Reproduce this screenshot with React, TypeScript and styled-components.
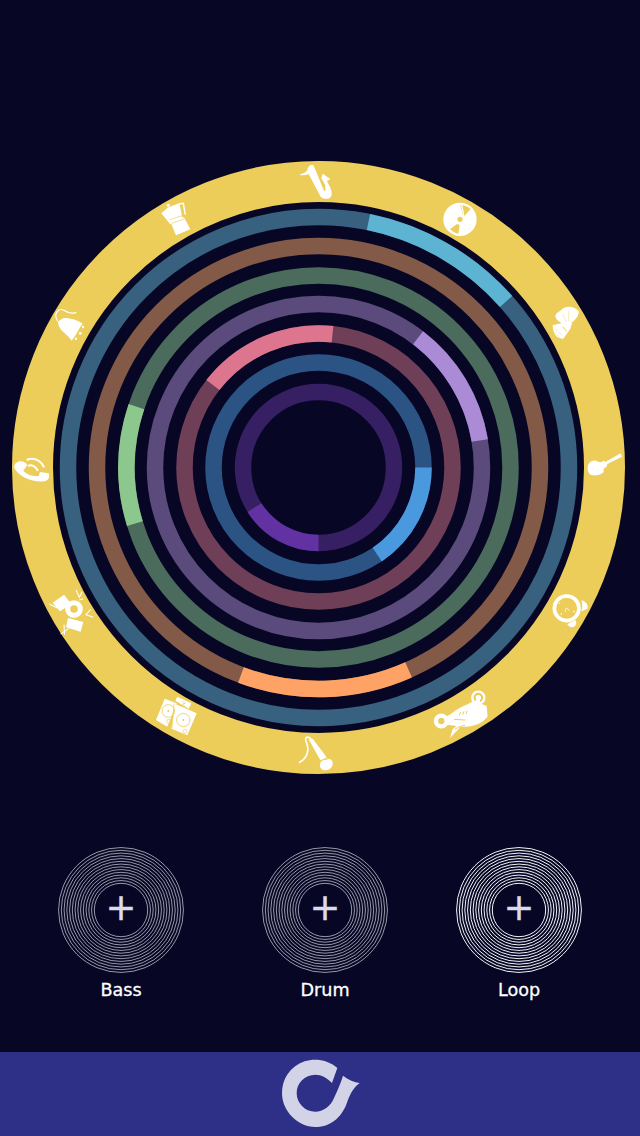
import React from 'react';
import styled, { createGlobalStyle } from 'styled-components';

const GOLD = '#edcd5a';
const BG = '#070725';

const Global = createGlobalStyle`
    html, body {
        margin: 0;
        padding: 0;
        background: ${BG};
    }
`;

const Page = styled.div`
    width: 640px;
    height: 1136px;
    display: flex;
    flex-direction: column;
    overflow: hidden;
    background: ${BG};
    font-family: "DejaVu Sans", sans-serif;
`;

const WheelArea = styled.div`
    padding: 161px 0 0 12px;
    line-height: 0;
`;

const Wheel = styled.svg`
    width: 613px;
    height: 613px;
    display: block;
`;

const Deck = styled.div`
    display: flex;
    margin-top: 73px;
`;

const Slot = styled.div<{ $left: number }>`
    width: 126px;
    margin-left: ${p => p.$left}px;
    display: flex;
    flex-direction: column;
    align-items: center;
`;

const Disc = styled.div`
    position: relative;
    width: 126px;
    height: 126px;
`;

const Grooves = styled.svg`
    width: 126px;
    height: 126px;
    display: block;
`;

const Plus = styled.span`
    position: absolute;
    inset: 0;
    display: flex;
    align-items: center;
    justify-content: center;
    padding-bottom: 6px;
    box-sizing: border-box;
    font-size: 37px;
    line-height: 1;
    color: #dcdce8;
    -webkit-text-stroke: 0.4px #dcdce8;
`;

const Label = styled.div`
    margin-top: 6px;
    font-size: 17.6px;
    line-height: 22px;
    color: #fff;
    -webkit-text-stroke: 0.3px #fff;
`;

const Footer = styled.footer`
    margin-top: auto;
    height: 84px;
    display: flex;
    align-items: center;
    justify-content: center;
    background: #2d3086;
`;

const Logo = styled.svg`
    width: 80px;
    height: 70px;
    margin: 0 0 2px 2px;
`;

const rings = [
    { r: 250.5, dim: '#37617f', hot: '#5cb3d2', from: 11.5, to: 48.5 },
    { r: 221.5, dim: '#835a47', hot: '#ffa265', from: 156, to: 200.5 },
    { r: 192, dim: '#4b6b5c', hot: '#8cc88e', from: 253, to: 288.5 },
    { r: 163.5, dim: '#5b4a7c', hot: '#ab8ad6', from: 37.5, to: 80.5 },
    { r: 134, dim: '#6f3f58', hot: '#de758f', from: 308, to: 6 },
    { r: 105, dim: '#2b5384', hot: '#4a99de', from: 90, to: 146 },
    { r: 75.5, dim: '#371f63', hot: '#6232a2', from: 180, to: 238 },
];

// angle is clockwise from twelve o'clock
function arc(r: number, from: number, to: number) {
    const end = to < from ? to + 360 : to;
    const pt = (a: number) => {
        const t = (a * Math.PI) / 180;
        return `${(r * Math.sin(t)).toFixed(2)} ${(-r * Math.cos(t)).toFixed(2)}`;
    };
    return `M${pt(from)} A${r} ${r} 0 ${end - from > 180 ? 1 : 0} 1 ${pt(end)}`;
}

// paths below are traced in 3x crop pixels, ox/oy is the crop corner on the page
function Glyph({ ox, oy, children }: { ox: number; oy: number; children: React.ReactNode }) {
    return (
        <g transform={`translate(${ox - 318.5} ${oy - 467.5}) scale(0.3333)`} fill="#fff">
            {children}
        </g>
    );
}

function Icons() {
    return (
        <>
            {/* sax */}
            <Glyph ox={280} oy={150}>
                <path d="M58 74C70 70 78 68 82 60C84 48 92 42 100 46L105 56L130 118C131 124 135 124 136 120L136 106L124 84L128 71L151 87L141 94C150 110 158 125 154 138C148 150 130 148 122 140L86 72C76 76 66 77 58 74Z" />
            </Glyph>
            {/* cd */}
            <Glyph ox={280} oy={150}>
                <circle cx="540" cy="208" r="50" />
                <path d="M541 165L548 194L554 197L572 177Q558 165 541 165Z" fill={GOLD} />
                <path d="M545 164L551 196" stroke="#fff" strokeWidth="4" fill="none" />
                <path d="M531 222L510 238Q520 248 535 252L539 225Z" fill={GOLD} />
                <circle cx="540" cy="208" r="8" fill={GOLD} />
            </Glyph>
            {/* gramophone */}
            <Glyph ox={280} oy={150}>
                <path d="M826 498C830 486 842 484 846 478C856 468 880 466 897 485C894 504 880 518 860 524C845 522 828 512 826 498Z" />
                <path d="M858 516L848 490M866 514L866 482" stroke={GOLD} strokeWidth="1.2" fill="none" />
                <path d="M818 526L860 516L877 518L871 536L850 566C830 566 820 555 818 526Z" />
                <path d="M826 536L846 556M824 546L838 560" stroke={GOLD} strokeWidth="1.5" fill="none" />
                <path d="M848 530L860 544" stroke={GOLD} strokeWidth="3" fill="none" />
            </Glyph>
            {/* guitar */}
            <Glyph ox={530} oy={440}>
                <path d="M173 85C172 70 185 58 198 62C205 64 208 68 214 66L222 62L226 66L272 40L276 50L232 72L230 80C222 84 218 88 222 94C218 104 195 110 182 104C174 100 173 92 173 85Z" />
            </Glyph>
            {/* alarm clock */}
            <Glyph ox={530} oy={440}>
                <circle cx="110" cy="505" r="37" fill="none" stroke="#fff" strokeWidth="11" />
                <path d="M106 516L108 504L120 512" stroke="#fff" strokeWidth="2" fill="none" />
                <circle cx="94" cy="522" r="2.5" />
                <circle cx="88" cy="490" r="2" />
                <circle cx="132" cy="515" r="2.5" />
                <path d="M154 481C168 484 176 496 172 506L154 514C158 502 158 492 154 481Z" />
                <path d="M112 553L136 540C142 548 138 560 126 562C120 562 116 558 112 553Z" />
            </Glyph>
            {/* snorkel camera */}
            <Glyph ox={130} oy={670}>
                <circle cx="1045" cy="83" r="18" fill="none" stroke="#fff" strokeWidth="7" />
                <circle cx="1045" cy="83" r="8" />
                <path d="M1038 90L1034 104L1050 104L1050 90Z" />
                <path d="M945 142C965 132 985 112 1010 104L1032 92L1070 108L1073 140C1052 165 1022 172 992 170L960 204L968 178L980 168L950 164Z" />
                <circle cx="934" cy="153" r="16" fill="none" stroke="#fff" strokeWidth="13" />
                <path d="M992 126L988 136M1002 124L998 134M1012 122L1008 132" stroke={GOLD} strokeWidth="3" fill="none" />
                <path d="M972 148L1006 150M975 178C985 170 995 168 1005 166" stroke={GOLD} strokeWidth="3" fill="none" />
            </Glyph>
            {/* mic */}
            <Glyph ox={130} oy={670}>
                <path d="M509 277C530 266 540 242 529 216C522 201 535 196 545 210" stroke="#fff" strokeWidth="5" fill="none" strokeLinecap="round" />
                <path d="M536 208L548 206L590 262L572 272Z" />
                <ellipse cx="589" cy="283" rx="20" ry="17" transform="rotate(-30 589 283)" />
                <path d="M568 272L606 264" stroke={GOLD} strokeWidth="3" fill="none" />
            </Glyph>
            {/* dj speakers */}
            <Glyph ox={130} oy={670}>
                <path d="M104 86L140 100L112 170L78 150Z" />
                <path d="M136 102L200 130L172 196L124 176Z" />
                <path d="M136 92L142 80L184 100L176 116Z" />
                <circle cx="115" cy="123" r="19" fill="none" stroke={GOLD} strokeWidth="2.5" />
                <circle cx="115" cy="123" r="3" fill={GOLD} />
                <circle cx="160" cy="150" r="20" fill="none" stroke={GOLD} strokeWidth="2.5" />
                <circle cx="160" cy="150" r="3" fill={GOLD} />
                <circle cx="116" cy="154" r="6" fill="none" stroke={GOLD} strokeWidth="2" />
                <circle cx="165" cy="184" r="6" fill="none" stroke={GOLD} strokeWidth="2" />
                <path d="M132 100L126 176" stroke={GOLD} strokeWidth="2" fill="none" />
                <path d="M156 94L166 100L158 102L164 108" stroke={GOLD} strokeWidth="2" fill="none" />
            </Glyph>
            {/* drums */}
            <Glyph ox={0} oy={440}>
                <path d="M158 488L192 464L214 492L180 514Z" />
                <path d="M204 534L250 546L242 575L198 562Z" />
                <circle cx="222" cy="507" r="19" fill="none" stroke="#fff" strokeWidth="15" />
                <path d="M148 492L172 504M228 450L238 472L246 456M238 480L250 476M272 508L258 524L280 532M192 554L194 584M182 582L206 566" stroke="#fff" strokeWidth="3.2" fill="none" />
            </Glyph>
            {/* phone */}
            <Glyph ox={0} oy={440}>
                <path d="M42 82C44 64 66 56 82 74L70 92C80 104 100 110 116 108L120 96L146 100C150 112 146 122 132 124C100 128 56 112 42 82Z" />
                <path d="M84 78C94 72 106 78 114 92M80 60C100 50 124 62 132 82" stroke="#fff" strokeWidth="6" fill="none" />
            </Glyph>
            {/* bell */}
            <Glyph ox={0} oy={150}>
                <path d="M172 512C160 490 175 474 190 480C205 490 215 492 228 488" stroke="#fff" strokeWidth="3.5" fill="none" strokeLinecap="round" />
                <path d="M173 515L190 504C210 503 232 510 248 521C236 535 232 550 215 572C205 556 185 545 178 532Z" />
                <circle cx="249" cy="531" r="3.5" />
                <circle cx="241" cy="550" r="4" />
                <circle cx="228" cy="566" r="3.5" />
            </Glyph>
            {/* moka */}
            <Glyph ox={0} oy={150}>
                <path d="M484 190L505 172L538 160L548 206L510 222Z" />
                <circle cx="505" cy="166" r="4.5" />
                <path d="M536 162L550 160L556 194" stroke="#fff" strokeWidth="4.5" fill="none" />
                <path d="M510 212L552 202L571 238L528 256Z" />
                <path d="M509 209L550 196M515 220L553 207" stroke={GOLD} strokeWidth="2" fill="none" />
            </Glyph>
        </>
    );
}

const slots = [
    { name: 'Bass', left: 58, stroke: '#d5d5e0', width: 0.7 },
    { name: 'Drum', left: 78, stroke: '#d5d5e0', width: 0.7 },
    { name: 'Loop', left: 68, stroke: '#f2f2f6', width: 1 },
];

const grooveRadii = Array.from({ length: 14 }, (_, i) => 27 + i * 2.75);

function Record({ name, left, stroke, width }: { name: string; left: number; stroke: string; width: number }) {
    return (
        <Slot $left={left}>
            <Disc>
                <Grooves viewBox="-63 -63 126 126">
                    {grooveRadii.map(r => (
                        <circle key={r} r={r - 0.3} fill="none" stroke={stroke} strokeWidth={width} />
                    ))}
                </Grooves>
                <Plus>+</Plus>
            </Disc>
            <Label>{name}</Label>
        </Slot>
    );
}

export default function App() {
    return (
        <Page>
            <Global />
            <WheelArea>
                <Wheel viewBox="-306.5 -306.5 613 613">
                    <circle r="286" fill="none" stroke={GOLD} strokeWidth="41" />
                    {rings.map(ring => (
                        <g key={ring.r} fill="none" strokeWidth="16.5">
                            <circle r={ring.r} stroke={ring.dim} />
                            <path d={arc(ring.r, ring.from, ring.to)} stroke={ring.hot} />
                        </g>
                    ))}
                    <Icons />
                </Wheel>
            </WheelArea>
            <Deck>
                {slots.map(s => (
                    <Record key={s.name} {...s} />
                ))}
            </Deck>
            <Footer>
                <Logo viewBox="120 55 238 210">
                    <path
                        fill="#d2d3e7"
                        d="M288 85C260 60 220 55 190 65C145 80 122 120 122 160C122 215 170 262 222 262C270 262 305 230 320 180C328 160 340 140 355 130C340 128 320 120 305 108C298 130 290 150 278 175C268 200 245 216 222 216C190 216 166 190 166 160C166 130 190 105 222 105C240 105 258 115 272 130Z"
                    />
                </Logo>
            </Footer>
        </Page>
    );
}
